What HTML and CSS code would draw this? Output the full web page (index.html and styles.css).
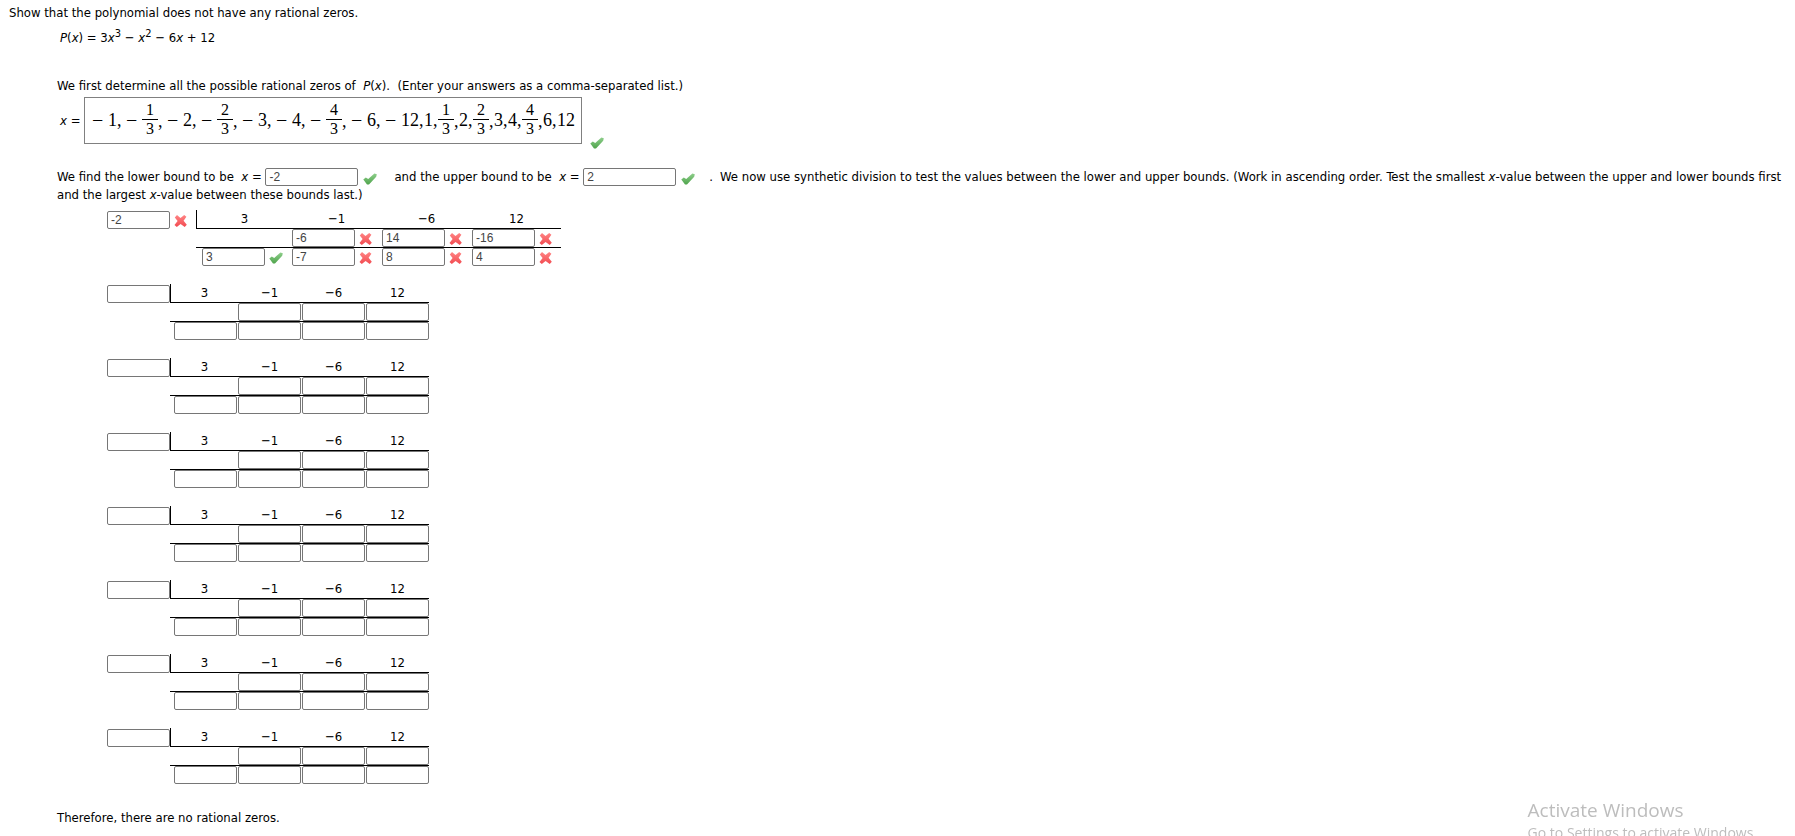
FILE: index.html
```html
<!DOCTYPE html>
<html lang="en">
<head>
<meta charset="utf-8">
<title>Rational zeros</title>
<link rel="stylesheet" href="styles.css">
</head>
<body>
<svg class="defs" aria-hidden="true">
  <defs>
    <linearGradient id="green" x1="0" y1="0" x2="0" y2="1"><stop offset="0" stop-color="#8fcf8c"/><stop offset="1" stop-color="#4fa44c"/></linearGradient>
    <linearGradient id="red" x1="0" y1="0" x2="0" y2="1"><stop offset="0" stop-color="#ff8585"/><stop offset="1" stop-color="#f24a50"/></linearGradient>
    <symbol id="check" viewBox="0 0 14 12"><path d="M.3 6.6 2.8 4.6 5.2 6 11.4.4 13.8 1.2 13.2 3.8 6 11.4 4 11.6Z" fill="url(#green)"/></symbol>
    <symbol id="cross" viewBox="0 0 14 12"><path d="M.8 2.4 3 .1 6.5 3 10.2 0 12.4 1.8 9.6 5.8 12.8 9.8 10.7 12 6.6 9 2.8 12 .5 10 3.6 5.9Z" fill="url(#red)"/></symbol>
  </defs>
</svg>
<main class="question">
  <p class="line">Show that the polynomial does not have any rational zeros.</p>
  <p class="line formula"><i>P</i>(<i>x</i>) = 3<i>x</i><sup>3</sup> − <i>x</i><sup>2</sup> − 6<i>x</i> + 12</p>
  <section class="steps">
    <p class="line">We first determine all the possible rational zeros of &nbsp;<i>P</i>(<i>x</i>). &nbsp;(Enter your answers as a comma-separated list.)</p>
    <div class="answer">
      <span class="label"><i>x</i> =</span>
      <div class="math">
        <span class="op">−</span>1<span class="sep">,</span>
        <span class="op">−</span><span class="frac"><span class="num">1</span><span class="den">3</span></span><span class="sep">,</span>
        <span class="op">−</span>2<span class="sep">,</span>
        <span class="op">−</span><span class="frac"><span class="num">2</span><span class="den">3</span></span><span class="sep">,</span>
        <span class="op">−</span>3<span class="sep">,</span>
        <span class="op">−</span>4<span class="sep">,</span>
        <span class="op">−</span><span class="frac"><span class="num">4</span><span class="den">3</span></span><span class="sep">,</span>
        <span class="op">−</span>6<span class="sep">,</span>
        <span class="op">−</span>12<span class="sep">,</span>
        1<span class="sep">,</span>
        <span class="frac"><span class="num">1</span><span class="den">3</span></span><span class="sep">,</span>
        2<span class="sep">,</span>
        <span class="frac"><span class="num">2</span><span class="den">3</span></span><span class="sep">,</span>
        3<span class="sep">,</span>
        4<span class="sep">,</span>
        <span class="frac"><span class="num">4</span><span class="den">3</span></span><span class="sep">,</span>
        6<span class="sep">,</span>
        12
      </div>
      <svg class="mark" role="img" aria-label="Correct"><use href="#check"/></svg>
    </div>
    <p class="line bounds"><label for="lower">We find the lower bound to be &nbsp;<i>x</i> =</label> <input class="field wide" id="lower" value="-2"><svg class="mark" role="img" aria-label="Correct"><use href="#check"/></svg><label class="upper" for="upper">and the upper bound to be &nbsp;<i>x</i> =</label> <input class="field wide" id="upper" value="2"><svg class="mark" role="img" aria-label="Correct"><use href="#check"/></svg><span class="dot">.</span>We now use synthetic division to test the values between the lower and upper bounds. (Work in ascending order. Test the smallest <i>x</i>-value between the upper and lower bounds first and the largest <i>x</i>-value between these bounds last.)</p>
    <div class="tables" id="tables">
      <table class="division graded">
        <tr>
          <td><input class="field" aria-label="Divisor" value="-2"><svg class="mark" role="img" aria-label="Incorrect"><use href="#cross"/></svg></td>
          <td class="corner">3</td><td class="coef">−1</td><td class="coef">−6</td><td class="coef">12</td>
        </tr>
        <tr>
          <td></td><td class="ruled"></td>
          <td class="ruled"><input class="field" aria-label="Product 1" value="-6"><svg class="mark" role="img" aria-label="Incorrect"><use href="#cross"/></svg></td>
          <td class="ruled"><input class="field" aria-label="Product 2" value="14"><svg class="mark" role="img" aria-label="Incorrect"><use href="#cross"/></svg></td>
          <td class="ruled"><input class="field" aria-label="Product 3" value="-16"><svg class="mark" role="img" aria-label="Incorrect"><use href="#cross"/></svg></td>
        </tr>
        <tr>
          <td></td>
          <td class="first"><input class="field" aria-label="Result 1" value="3"><svg class="mark" role="img" aria-label="Correct"><use href="#check"/></svg></td>
          <td><input class="field" aria-label="Result 2" value="-7"><svg class="mark" role="img" aria-label="Incorrect"><use href="#cross"/></svg></td>
          <td><input class="field" aria-label="Result 3" value="8"><svg class="mark" role="img" aria-label="Incorrect"><use href="#cross"/></svg></td>
          <td><input class="field" aria-label="Result 4" value="4"><svg class="mark" role="img" aria-label="Incorrect"><use href="#cross"/></svg></td>
        </tr>
      </table>
    </div>
    <template id="blank">
      <table class="division">
        <tr>
          <td><input class="field" aria-label="Divisor"></td>
          <td class="corner">3</td><td class="coef">−1</td><td class="coef">−6</td><td class="coef">12</td>
        </tr>
        <tr>
          <td></td><td class="ruled"></td>
          <td class="ruled"><input class="field" aria-label="Product 1"></td>
          <td class="ruled"><input class="field" aria-label="Product 2"></td>
          <td class="ruled"><input class="field" aria-label="Product 3"></td>
        </tr>
        <tr>
          <td></td>
          <td class="first"><input class="field" aria-label="Result 1"></td>
          <td><input class="field" aria-label="Result 2"></td>
          <td><input class="field" aria-label="Result 3"></td>
          <td><input class="field" aria-label="Result 4"></td>
        </tr>
      </table>
    </template>
    <p class="line">Therefore, there are no rational zeros.</p>
  </section>
</main>
<aside class="watermark">
  <p class="watermark-title">Activate Windows</p>
  <p class="watermark-text">Go to Settings to activate Windows.</p>
</aside>
<script src="script.js"></script>
</body>
</html>
```
FILE: styles.css
```css
* { box-sizing: border-box; }

body {
  margin: 0;
  background: #fff;
  color: #000;
  font: 13px/18px "DejaVu Sans Condensed", "DejaVu Sans", sans-serif;
}

p { margin: 0; }

sup { font-size: 11px; line-height: 0; }

.defs { position: absolute; width: 0; height: 0; }

.question { padding: 4px 0 0 9px; }

.formula { margin-top: 7px; padding-left: 51px; }

.steps { margin-top: 30px; padding-left: 48px; }

.answer { display: flex; align-items: center; margin-top: 2px; padding-left: 3px; }
.answer .label { width: 24px; }
.answer .mark { align-self: flex-end; margin: 0 0 -5px 8px; }

.math {
  display: flex;
  align-items: center;
  height: 47px;
  padding: 0 6px 2px 3px;
  border: 1px solid #808080;
  font: 18px/20px "Liberation Serif", serif;
}
.op { width: 20px; padding-left: 4px; font-size: 20px; }
.sep { width: 5px; }
.frac + .sep { padding-top: 2px; }
.frac {
  display: flex;
  flex-direction: column;
  width: 16px;
  font-size: 16px;
  line-height: 18px;
  text-align: center;
}
.num { border-bottom: 1px solid #000; }

.bounds { margin-top: 24px; }
.bounds .mark { margin: 0 0 -4px 5px; }
.upper { margin-left: 17px; }
.dot { margin: 0 7px 0 14px; }

.field {
  width: 63px;
  height: 18px;
  margin: 0;
  padding: 0 3px;
  border: 1px solid #767676;
  border-radius: 2px;
  background: #fff;
  color: #444;
  font: 12px "Liberation Sans", Arial, sans-serif;
  vertical-align: top;
}
.wide { width: 93px; }

.mark { width: 14px; height: 12px; }

.tables { display: grid; gap: 18px; justify-items: start; padding: 6px 0 25px 49px; }

.division { border-collapse: separate; border-spacing: 0; }
.division td { height: 18px; padding: 0 0 0 1px; line-height: 18px; white-space: nowrap; }
.division .mark { margin: 0 8px -3px 4px; vertical-align: baseline; }
.division .corner { border-left: 1px solid #000; border-bottom: 1px solid #000; text-align: center; }
.division .coef { border-bottom: 1px solid #000; text-align: center; }
.division .ruled { border-bottom: 1px solid #000; }
.division .first { padding-left: 4px; }
.graded .first { padding-left: 6px; }

.watermark {
  position: fixed;
  top: 797px;
  right: 38px;
  color: #bdbdbd;
  font-family: "Open Sans", "Noto Sans", sans-serif;
  pointer-events: none;
}
.watermark-title { font-size: 19px; line-height: 26px; }
.watermark-text { font-size: 14px; line-height: 20px; }
```
FILE: script.js
```js
const tables = document.getElementById("tables");
const blank = document.getElementById("blank");

for (let i = 0; i < 7; i++) {
  tables.append(blank.content.cloneNode(true));
}
```
